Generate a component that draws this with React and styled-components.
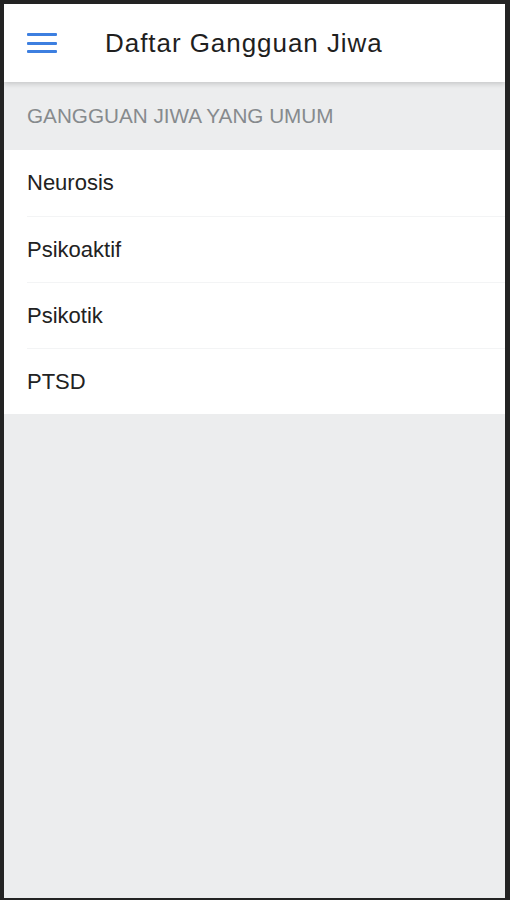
import React from 'react';
import styled, { createGlobalStyle } from 'styled-components';

const GlobalStyle = createGlobalStyle`
    html, body {
        margin: 0;
        padding: 0;
        background: #232323;
    }
    body {
        font-family: "Liberation Sans", Arial, sans-serif;
    }
`
const Frame = styled.div`
    width: 510px;
    height: 900px;
    box-sizing: border-box;
    padding: 4px 5px 2px 4px;
    background: #232323;
`
const Screen = styled.div`
    height: 100%;
    background: #ecedee;
    display: flex;
    flex-direction: column;
    overflow: hidden;
`
const Toolbar = styled.header`
    height: 78px;
    flex-shrink: 0;
    background: #fff;
    display: flex;
    align-items: center;
    padding: 0 23px;
    box-shadow: 0 2px 5px rgba(0, 0, 0, 0.16);
    position: relative;
    z-index: 1;
`
const MenuButton = styled.button`
    border: none;
    background: none;
    padding: 0;
    width: 30px;
    height: 20px;
    display: flex;
    flex-direction: column;
    justify-content: space-between;
    cursor: pointer;
`
const MenuBar = styled.span`
    display: block;
    height: 3px;
    border-radius: 1px;
    background: #3d7fe0;
`
const Title = styled.h1`
    margin: 0 0 0 48px;
    font-size: 26px;
    letter-spacing: 0.95px;
    font-weight: normal;
    color: #1f1f1f;
`
const SectionHeader = styled.div`
    height: 68px;
    display: flex;
    align-items: center;
    padding: 0 23px;
    font-size: 20.7px;
    color: #868a8d;
    text-transform: uppercase;
    background: #ecedee;
`
const List = styled.ul`
    list-style: none;
    margin: 0;
    padding: 0;
    background: #fff;
`
const Item = styled.li`
    height: 66px;
    display: flex;
    align-items: center;
    margin-left: 23px;
    font-size: 22px;
    color: #222;
    border-top: ${props => props.first ? 'none' : '1px solid #f3f4f5'};
    box-sizing: border-box;
`

const items = ['Neurosis', 'Psikoaktif', 'Psikotik', 'PTSD']

export default function App() {
    return (
        <Frame>
            <GlobalStyle />
            <Screen>
                <Toolbar>
                    <MenuButton aria-label="menu">
                        <MenuBar />
                        <MenuBar />
                        <MenuBar />
                    </MenuButton>
                    <Title>Daftar Gangguan Jiwa</Title>
                </Toolbar>
                <SectionHeader>Gangguan Jiwa yang Umum</SectionHeader>
                <List>
                    {items.map((name, i) => (
                        <Item key={name} first={i === 0}>{name}</Item>
                    ))}
                </List>
            </Screen>
        </Frame>
    )
}
